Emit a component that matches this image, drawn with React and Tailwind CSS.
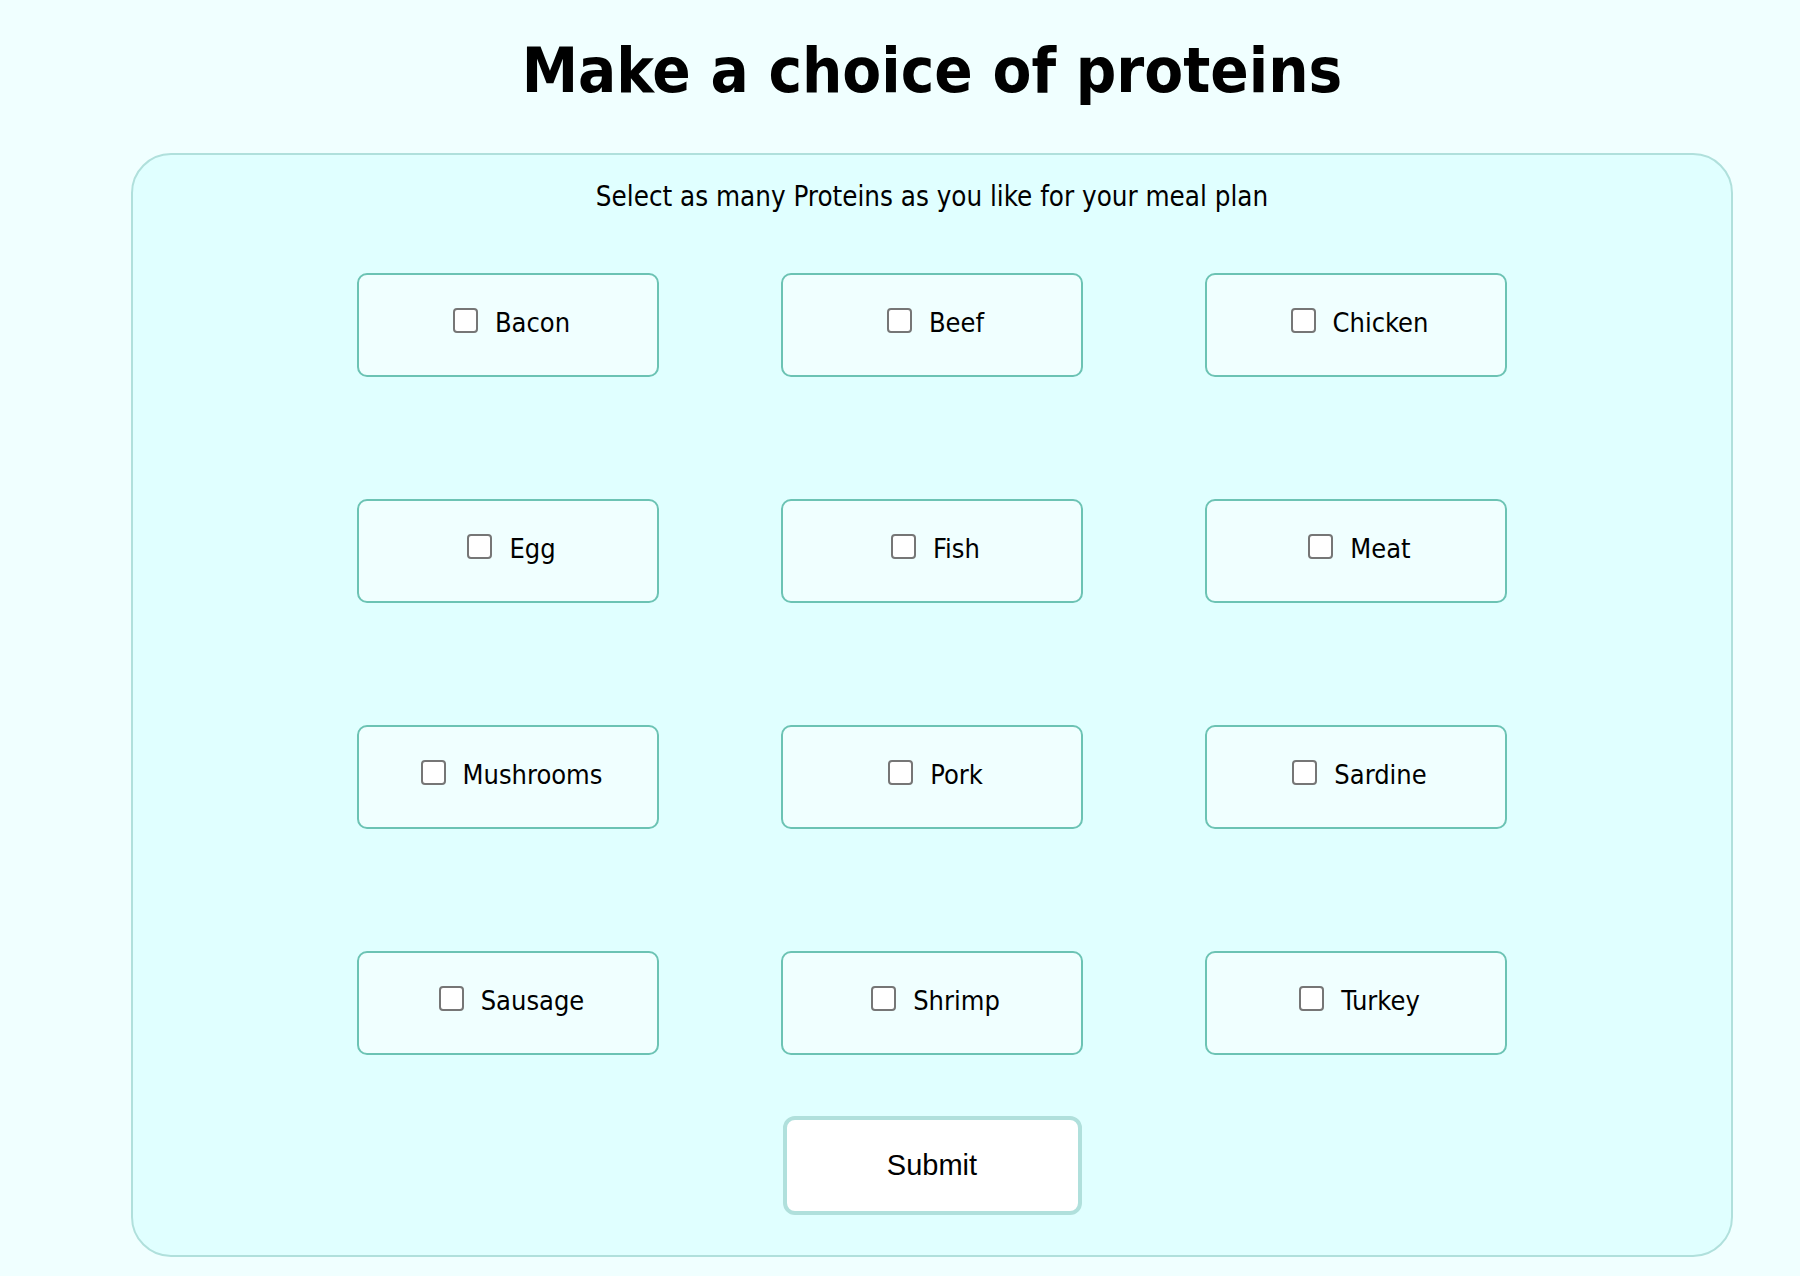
const proteins = [
  'Bacon', 'Beef', 'Chicken',
  'Egg', 'Fish', 'Meat',
  'Mushrooms', 'Pork', 'Sardine',
  'Sausage', 'Shrimp', 'Turkey',
];

const tahomaish = { fontFamily: '"DejaVu Sans Condensed", "DejaVu Sans", sans-serif' };

function ProteinCard({ name }) {
  return (
    <label className="h-[104px] pb-[4px] pl-[7px] flex items-center justify-center gap-[17px] bg-[#f0ffff] border-2 border-[#6cc3b4] rounded-[10px] cursor-pointer">
      <input
        type="checkbox"
        className="appearance-none w-[25px] h-[25px] -mt-[6px] bg-white border-2 border-[#767676] rounded-[4px] shrink-0"
      />
      <span className="text-[27px] leading-[26px] text-black">{name}</span>
    </label>
  );
}

export default function App() {
  return (
    <div className="min-h-screen bg-[#f0ffff]" style={tahomaish}>
      <div className="ml-[131px] w-[1602px] pt-[39px]">
        <h1 className="text-center text-[63px] leading-[64px] font-bold text-black">
          Make a choice of proteins
        </h1>

        <div className="mt-[50px] h-[1104px] bg-[#e0ffff] border-2 border-[#b0e0dc] rounded-[40px] pt-[29px]">
          <p className="text-center text-[27.5px] leading-[24px] text-black">
            Select as many Proteins as you like for your meal plan
          </p>

          <div className="mt-[65px] grid grid-cols-[repeat(3,302px)] gap-[122px] justify-center">
            {proteins.map((p) => (
              <ProteinCard key={p} name={p} />
            ))}
          </div>

          <div className="mt-[61px] flex justify-center">
            <button
              type="submit"
              className="w-[299px] h-[99px] bg-white border-4 border-[#b0e0dc] rounded-[12px] text-[29px] text-black"
              style={{ fontFamily: '"Liberation Sans", Arial, sans-serif' }}
            >
              Submit
            </button>
          </div>
        </div>
      </div>
    </div>
  );
}
